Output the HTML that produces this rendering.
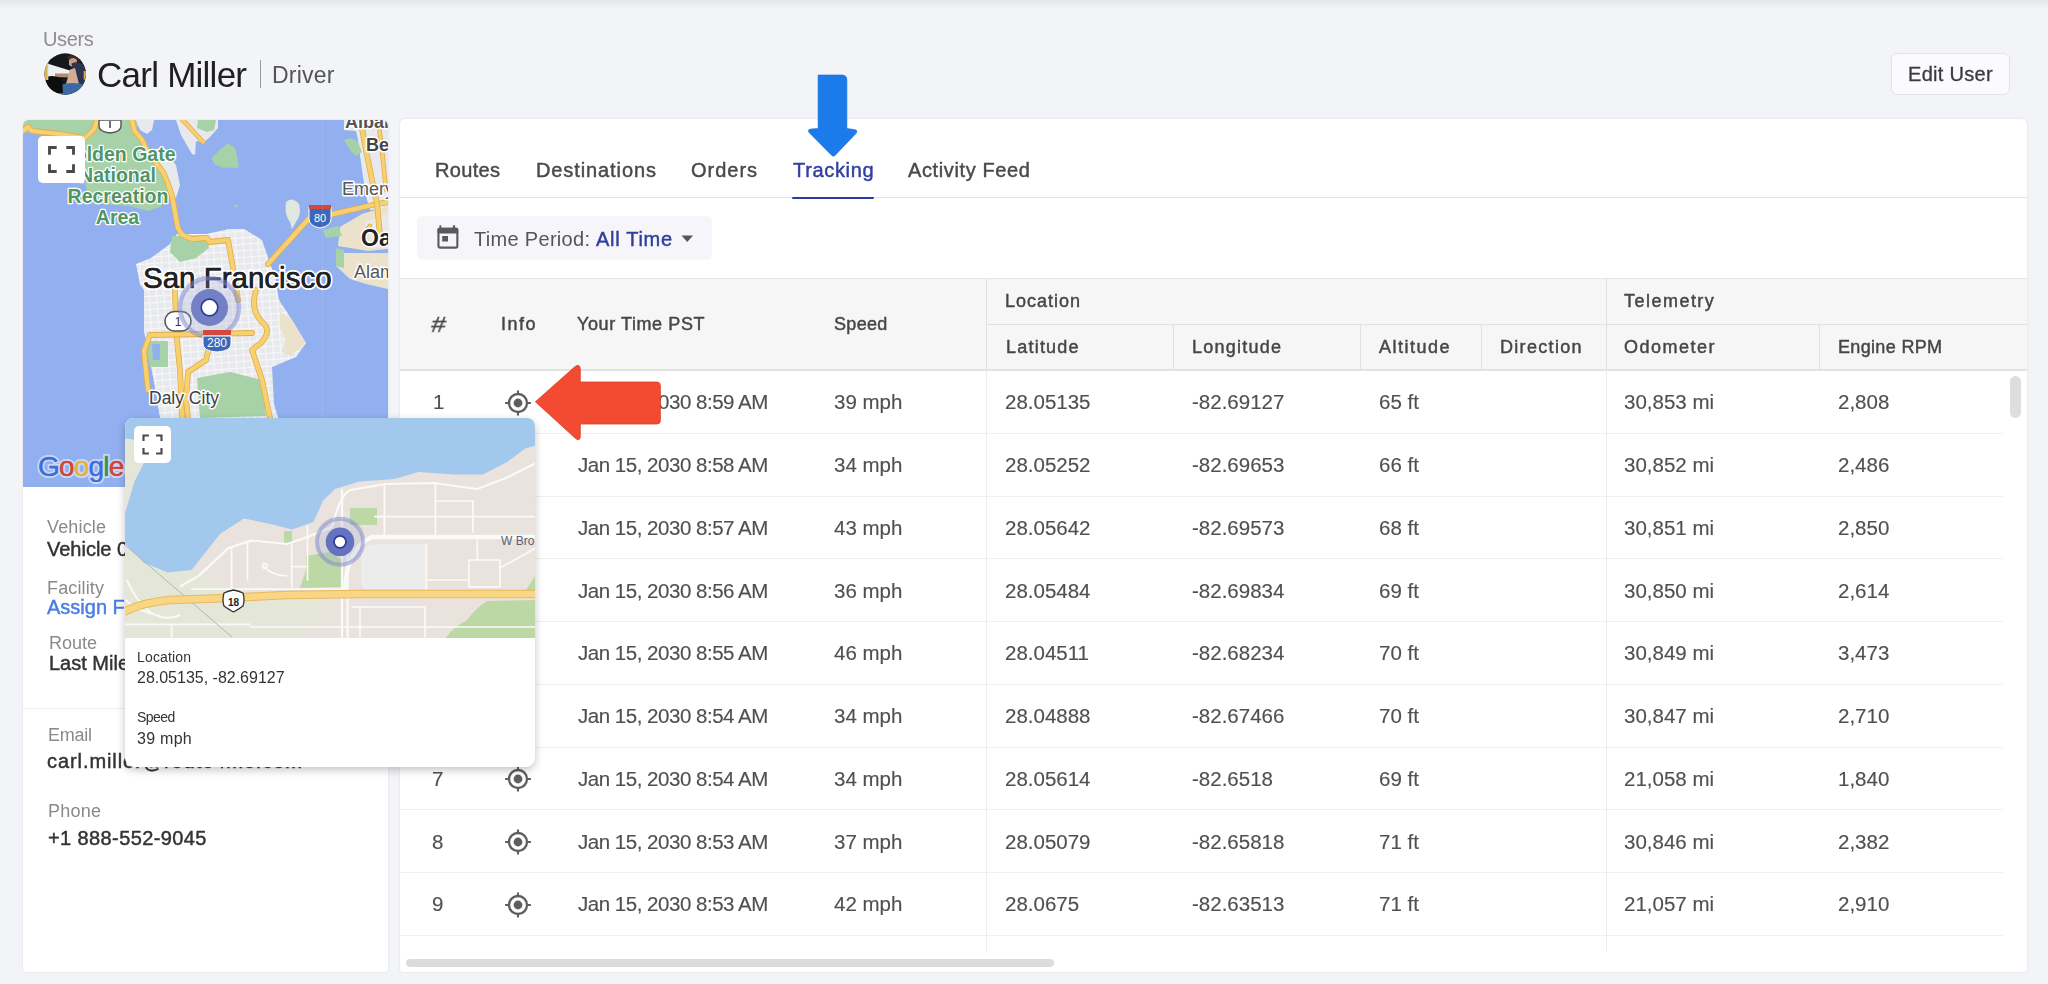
<!DOCTYPE html>
<html><head><meta charset="utf-8"><style>
html,body{margin:0;padding:0;}
body{-webkit-font-smoothing:antialiased;width:2048px;height:984px;overflow:hidden;position:relative;background:#f3f4f8;font-family:"Liberation Sans",sans-serif;}
.t{position:absolute;white-space:nowrap;line-height:1;will-change:transform;}
svg{display:block}
</style></head><body>
<div style="position:absolute;left:0px;top:0px;width:2048px;height:10px;background:linear-gradient(#e6e7ec,#f3f4f8)"></div>
<div class="t" style="left:43.30px;top:28.87px;font-size:20px;color:#8e8e8e;letter-spacing:-0.375px;font-weight:400;">Users</div>
<svg style="position:absolute;left:44px;top:53px" width="43" height="43" viewBox="44 53 43 43">
<defs><clipPath id="avc"><circle cx="65.2" cy="74.0" r="20.7"/></clipPath></defs>
<g clip-path="url(#avc)">
<rect x="40" y="50" width="50" height="50" fill="#15171b"/>
<path d="M48 63.7 L71.5 71 L72 74.5 L62 76 L48 78.5 Z" fill="#f1f1f1"/>
<path d="M55 73.6 L70.5 73.6 L70.5 77.6 L55 77 Z" fill="#b48c72"/>
<path d="M69 58 Q74 55 77 59 L76.5 66.5 Q72 68 69 65 Z" fill="#c79e86"/>
<path d="M67 57 Q73 52 79 57 L80 63 L77 60 Q73 56 69 60 Z" fill="#3a2a22"/>
<path d="M71.5 63.5 Q78 61 82 64 L85.8 70 L85.8 86 L77 86 L73 72 Z" fill="#2b3552"/>
<path d="M70 69.5 L75 68 L79 84 L70 86 L66 84 Z" fill="#d4ab95"/>
<path d="M59 86 Q66 82 80 83.5 L86 86 L86 96 L56 96 Z" fill="#3b69a6"/>
<path d="M46.5 77 Q54 74 62 79 L63 93 L46 93 Z" fill="#0d0e10"/>
<path d="M44 64 L48 64 L48 80 L44 80 Z" fill="#d9b14c"/>
<path d="M83.7 71 L86 71 L86 79.5 L83.7 79.5 Z" fill="#d9b14c"/>
<path d="M47.2 62 L48.3 62 L48.3 80 L47.2 80 Z" fill="#cfd3d8"/>
</g>
</svg>
<div class="t" style="left:96.50px;top:56.77px;font-size:35px;color:#202020;letter-spacing:-0.750px;font-weight:400;">Carl Miller</div>
<div style="position:absolute;left:259.5px;top:60px;width:1.6px;height:28px;background:#9a9a9a"></div>
<div class="t" style="left:271.50px;top:63.83px;font-size:23px;color:#555555;letter-spacing:0.240px;font-weight:400;">Driver</div>
<div style="position:absolute;left:1890.5px;top:52.5px;width:119px;height:42.5px;box-sizing:border-box;border:1px solid #e2e3e8;border-radius:6px;background:#fbfbfd"></div>
<div class="t" style="left:1907.80px;top:64.37px;font-size:20px;color:#3a3a40;letter-spacing:0.300px;font-weight:400;-webkit-text-stroke:0.3px #3a3a40;">Edit User</div>
<div style="position:absolute;left:23px;top:120px;width:365px;height:852.2px;background:#fff;border-radius:5px 5px 3px 3px;box-shadow:0 0 2px rgba(0,0,0,0.13)"></div>
<svg style="position:absolute;left:23px;top:120px;border-radius:6px 6px 0 0" width="365" height="367" viewBox="23 120 365 367"><defs><clipPath id="lmc"><path d="M23 126 Q23 120 29 120 H382 Q388 120 388 126 V487 H23 Z"/></clipPath></defs><g clip-path="url(#lmc)"><rect x="23" y="120" width="365" height="367" fill="#92b0ef"/>
<path d="M23 120 H140 L136 132 L142 140 L150 152 L160 165 L168 182 L172 197 L160 207 L148 211 L130 206 L104 204 L88 198 L85 180 L84 140 L60 135 L40 133 L23 132 Z" fill="#a7d1a6"/>
<path d="M136 120 H154 L152 130 L147 134 L140 130 Z" fill="#e8e9ed"/>
<path d="M150 150 L162 148 L176 165 L180 185 L176 198 L170 196 L165 178 L155 160 Z" fill="#e8e9ed"/>
<path d="M176 120 H218 L218 128 L210 137 L204 142 L196 141 L195 155 L192 154 L181 135 L178 126 Z" fill="#e8e9ed"/>
<path d="M198 120 H216 L214 130 L207 132 L197 128 Z" fill="#a7d1a6"/>
<path d="M211.6 158.3 L221 148.8 L227.7 143.6 L234.3 147.3 L237.2 156 L238.7 167.8 L224 167.8 L215.2 164.9 Z" fill="#a7d1a6"/>
<circle cx="236" cy="206" r="1.5" fill="#a7d1a6"/>
<path d="M286 202 Q292 196 299 204 Q302 214 296 222 L292 229 L290 222 Q284 214 286 202 Z" fill="#dfe8df"/>
<path d="M344 120 H388 V208 L370 210 L366 196 L362 170 L358 140 L356 131 L344 130 Z" fill="#e8e9ed"/>
<path d="M344 140 Q352 136 358 142 L362 152 L356 156 L350 150 Z" fill="#a7d1a6"/>
<path d="M340 227 L362 214 L388 206 V249 L368 251 L338 246 Z" fill="#ebe2cc"/>
<path d="M365 222 L388 214 V246 L372 248 Z" fill="#e8e9ed"/>
<path d="M336 253 L388 253 V289 L366 284 L350 279 L336 266 Z" fill="#ebe2cc"/>
<path d="M323 230 L338 226 L342 236 L326 238 Z" fill="#a7d1a6"/>
<path d="M336 248 L344 250 L344 268 L336 266 Z" fill="#a7d1a6"/>
<path d="M136 264 L151 258 L170 244 L177 234 L207 234 L229 229 L244 229 L262 240 L268 258 L275 277 L279 300 L292 320 L306 343 L296 357 L272 367 L274 404 L278 418 L278 487 L160 487 L160 418 L156 392 L148 351 L144 331 L144 290 L140 284 Z" fill="#e8e9ed"/>
<defs><pattern id="sfgrid" width="7.5" height="6.5" patternUnits="userSpaceOnUse" patternTransform="rotate(-4)"><path d="M0 0.5 H7.5 M0.5 0 V6.5" stroke="#fbfbfc" stroke-width="1.1"/></pattern></defs>
<path d="M136 264 L151 258 L170 244 L177 234 L207 234 L229 229 L244 229 L262 240 L268 258 L275 277 L279 300 L292 320 L306 343 L296 357 L272 367 L274 404 L278 418 L278 487 L160 487 L160 418 L156 392 L148 351 L144 331 L144 290 L140 284 Z" fill="url(#sfgrid)" opacity="0.8"/>
<path d="M280 312 L292 320 L300 334 L306 343 L298 350 L290 356 L282 352 L286 340 L280 328 Z" fill="#ebe2cc"/>
<path d="M172 236 L207 235 L209 248 L196 258 L180 262 L170 252 Z" fill="#a7d1a6"/>
<path d="M145 341 L168 341 L168 367 L150 367 Z" fill="#a7d1a6"/>
<path d="M152 344 L160 344 L160 360 L153 360 Z" fill="#92b0ef"/>
<path d="M197 378 L230 372 L262 380 L266 416 L200 418 Z" fill="#a7d1a6"/>
<path d="M131.7 119 L134.6 131 L141.8 139.6 L147.5 151 L154.8 161.3 L163.4 172.8 L167.7 183 L172 196 L175 211.8 L177.8 227.7 L182.2 234.9 L192.3 239.2 L206.7 237.8 L209.6 242 L228 240 L232 262 L238 300" fill="none" stroke="#e3ab4c" stroke-width="5.800000000000001" stroke-linejoin="round" stroke-linecap="round"/><path d="M131.7 119 L134.6 131 L141.8 139.6 L147.5 151 L154.8 161.3 L163.4 172.8 L167.7 183 L172 196 L175 211.8 L177.8 227.7 L182.2 234.9 L192.3 239.2 L206.7 237.8 L209.6 242 L228 240 L232 262 L238 300" fill="none" stroke="#f7d16f" stroke-width="4.2" stroke-linejoin="round" stroke-linecap="round"/>
<path d="M23 131 L28 127 L32 131 L41 132 L60 134 L85 138 L94 129.5 L97 121" fill="none" stroke="#e3ab4c" stroke-width="5.800000000000001" stroke-linejoin="round" stroke-linecap="round"/><path d="M23 131 L28 127 L32 131 L41 132 L60 134 L85 138 L94 129.5 L97 121" fill="none" stroke="#f7d16f" stroke-width="4.2" stroke-linejoin="round" stroke-linecap="round"/>
<path d="M181 118 L203 142" fill="none" stroke="#e3ab4c" stroke-width="4.800000000000001" stroke-linejoin="round" stroke-linecap="round"/><path d="M181 118 L203 142" fill="none" stroke="#f7d16f" stroke-width="3.2" stroke-linejoin="round" stroke-linecap="round"/>
<path d="M268 264 L309 218.5 L331.5 214.4 L376.7 204 L390 202" fill="none" stroke="#e3ab4c" stroke-width="5.800000000000001" stroke-linejoin="round" stroke-linecap="round"/><path d="M268 264 L309 218.5 L331.5 214.4 L376.7 204 L390 202" fill="none" stroke="#f7d16f" stroke-width="4.2" stroke-linejoin="round" stroke-linecap="round"/>
<path d="M360 118 L366 150 L372 180 L377 204 L380 235" fill="none" stroke="#e3ab4c" stroke-width="5.800000000000001" stroke-linejoin="round" stroke-linecap="round"/><path d="M360 118 L366 150 L372 180 L377 204 L380 235" fill="none" stroke="#f7d16f" stroke-width="4.2" stroke-linejoin="round" stroke-linecap="round"/>
<path d="M378 118 L382 150 L386 190" fill="none" stroke="#e3ab4c" stroke-width="4.6" stroke-linejoin="round" stroke-linecap="round"/><path d="M378 118 L382 150 L386 190" fill="none" stroke="#f7d16f" stroke-width="3" stroke-linejoin="round" stroke-linecap="round"/>
<path d="M370 226 L362 238" fill="none" stroke="#e3ab4c" stroke-width="4.6" stroke-linejoin="round" stroke-linecap="round"/><path d="M370 226 L362 238" fill="none" stroke="#f7d16f" stroke-width="3" stroke-linejoin="round" stroke-linecap="round"/>
<path d="M256 290 Q250 310 262 322 Q272 330 262 342 L252 350 L262 380 L270 418 L274 487" fill="none" stroke="#e3ab4c" stroke-width="5.800000000000001" stroke-linejoin="round" stroke-linecap="round"/><path d="M256 290 Q250 310 262 322 Q272 330 262 342 L252 350 L262 380 L270 418 L274 487" fill="none" stroke="#f7d16f" stroke-width="4.2" stroke-linejoin="round" stroke-linecap="round"/>
<path d="M175 290 L176 330 L180 371 L182 418" fill="none" stroke="#e3ab4c" stroke-width="5.800000000000001" stroke-linejoin="round" stroke-linecap="round"/><path d="M175 290 L176 330 L180 371 L182 418" fill="none" stroke="#f7d16f" stroke-width="4.2" stroke-linejoin="round" stroke-linecap="round"/>
<path d="M148 390 L144 351 L150 335 L205 334 L252 333" fill="none" stroke="#e3ab4c" stroke-width="5.800000000000001" stroke-linejoin="round" stroke-linecap="round"/><path d="M148 390 L144 351 L150 335 L205 334 L252 333" fill="none" stroke="#f7d16f" stroke-width="4.2" stroke-linejoin="round" stroke-linecap="round"/>
<path d="M211 339 L206 360 L188 372 L186 400 L188 418" fill="none" stroke="#e3ab4c" stroke-width="5.800000000000001" stroke-linejoin="round" stroke-linecap="round"/><path d="M211 339 L206 360 L188 372 L186 400 L188 418" fill="none" stroke="#f7d16f" stroke-width="4.2" stroke-linejoin="round" stroke-linecap="round"/>
<path d="M99 120 H121 V126 Q121 132 110 133 Q99 132 99 126 Z" fill="#fff" stroke="#555" stroke-width="1.4"/><path d="M110 121 V128" stroke="#444" stroke-width="1.5"/>
<rect x="165" y="311.5" width="26" height="19.5" rx="9.5" fill="#fff" stroke="#555" stroke-width="1.6"/><text x="178" y="326" font-size="12" fill="#333" text-anchor="middle" font-family="Liberation Sans, sans-serif">1</text>
<path d="M309 207 H331 V219 Q331 226 320 228 Q309 226 309 219 Z" fill="#3c68b7" stroke="#fff" stroke-width="1"/><rect x="309" y="205" width="22" height="4" fill="#d4473c"/><text x="320" y="222" font-size="11" fill="#fff" text-anchor="middle" font-family="Liberation Sans, sans-serif">80</text>
<text x="175.5" y="160.5" font-size="19.5" font-weight="700" fill="#4f9566" text-anchor="end" stroke="#fff" stroke-width="2.5" stroke-linejoin="round" paint-order="stroke" font-family="Liberation Sans, sans-serif">Golden Gate</text>
<text x="156" y="181.5" font-size="19.5" font-weight="700" fill="#4f9566" text-anchor="end" stroke="#fff" stroke-width="2.5" stroke-linejoin="round" paint-order="stroke" font-family="Liberation Sans, sans-serif">National</text>
<text x="118" y="203" font-size="19.5" font-weight="700" fill="#4f9566" text-anchor="middle" stroke="#fff" stroke-width="2.5" stroke-linejoin="round" paint-order="stroke" font-family="Liberation Sans, sans-serif">Recreation</text>
<text x="117.5" y="224" font-size="19.5" font-weight="700" fill="#4f9566" text-anchor="middle" stroke="#fff" stroke-width="2.5" stroke-linejoin="round" paint-order="stroke" font-family="Liberation Sans, sans-serif">Area</text>
<text x="345" y="128" font-size="18" font-weight="700" fill="#555" text-anchor="start" stroke="#fff" stroke-width="3" stroke-linejoin="round" paint-order="stroke" font-family="Liberation Sans, sans-serif">Albany</text>
<text x="366" y="151" font-size="18" font-weight="700" fill="#444" text-anchor="start" stroke="#fff" stroke-width="3" stroke-linejoin="round" paint-order="stroke" font-family="Liberation Sans, sans-serif">Berk</text>
<text x="342" y="195" font-size="18" font-weight="500" fill="#555" text-anchor="start" stroke="#fff" stroke-width="3" stroke-linejoin="round" paint-order="stroke" font-family="Liberation Sans, sans-serif">Emeryville</text>
<text x="361" y="245.5" font-size="23" font-weight="700" fill="#222" text-anchor="start" stroke="#fff" stroke-width="3" stroke-linejoin="round" paint-order="stroke" font-family="Liberation Sans, sans-serif">Oakland</text>
<text x="354" y="278" font-size="18" font-weight="500" fill="#555" text-anchor="start" stroke="#fff" stroke-width="3" stroke-linejoin="round" paint-order="stroke" font-family="Liberation Sans, sans-serif">Alameda</text>
<text x="143" y="287.5" font-size="29.5" font-weight="400" fill="#202124" text-anchor="start" stroke="#fff" stroke-width="4" stroke-linejoin="round" paint-order="stroke" font-family="Liberation Sans, sans-serif">San Francisco</text>
<text x="143" y="287.5" font-size="29.5" fill="#202124" stroke="#202124" stroke-width="0.5" font-family="Liberation Sans, sans-serif">San Francisco</text>
<circle cx="209.5" cy="307.5" r="29.5" fill="rgba(150,160,215,0.22)" stroke="rgba(125,135,205,0.5)" stroke-width="4.5"/><circle cx="209.5" cy="307.5" r="18.5" fill="#7480c6"/><circle cx="209.5" cy="307.5" r="8.3" fill="#fff" stroke="#2d3a9c" stroke-width="1.7"/>
<path d="M203 336 H231 V344 Q231 351 217 352 Q203 351 203 344 Z" fill="#3c68b7" stroke="#fff" stroke-width="1"/><rect x="203" y="330" width="28" height="5" fill="#d4473c"/><text x="217" y="347" font-size="12" fill="#fff" text-anchor="middle" font-family="Liberation Sans, sans-serif">280</text>
<text x="149" y="404" font-size="17.5" font-weight="500" fill="#3c4043" text-anchor="start" stroke="#fff" stroke-width="3" stroke-linejoin="round" paint-order="stroke" font-family="Liberation Sans, sans-serif">Daly City</text>
<text x="38" y="475.5" font-size="28" font-weight="400" stroke="#c9d8f7" stroke-width="4" paint-order="stroke" font-family="Liberation Sans, sans-serif" letter-spacing="-0.8"><tspan fill="#3f6fd8">G</tspan><tspan fill="#d2463a">o</tspan><tspan fill="#e6b33a">o</tspan><tspan fill="#3f6fd8">g</tspan><tspan fill="#3c8f53">l</tspan><tspan fill="#d2463a">e</tspan></text>
<text x="38" y="475.5" font-size="28" font-weight="400" stroke-width="0.3" opacity="0.9" font-family="Liberation Sans, sans-serif" letter-spacing="-0.8"><tspan fill="#3f6fd8" stroke="#3f6fd8">G</tspan><tspan fill="#d2463a" stroke="#d2463a">o</tspan><tspan fill="#e6b33a" stroke="#e6b33a">o</tspan><tspan fill="#3f6fd8" stroke="#3f6fd8">g</tspan><tspan fill="#3c8f53" stroke="#3c8f53">l</tspan><tspan fill="#d2463a" stroke="#d2463a">e</tspan></text>
<line x1="322.3" y1="120" x2="322.3" y2="487" stroke="rgba(255,255,255,0.12)" stroke-width="1"/>
<rect x="38" y="136" width="47" height="47" rx="5" fill="#fff"/><path d="M49.5 154.7 V147.5 H56.7 M66.3 147.5 H73.5 V154.7 M73.5 164.3 V171.5 H66.3 M56.7 171.5 H49.5 V164.3" fill="none" stroke="#4a4a4a" stroke-width="2.88"/></g></svg>
<div class="t" style="left:46.80px;top:518.36px;font-size:18px;color:#8a8a8a;letter-spacing:0.167px;font-weight:400;">Vehicle</div>
<div class="t" style="left:46.80px;top:539.07px;font-size:20px;color:#333333;letter-spacing:0.000px;font-weight:400;-webkit-text-stroke:0.45px #333333;">Vehicle 01</div>
<div class="t" style="left:47.00px;top:578.76px;font-size:18px;color:#8a8a8a;letter-spacing:0.143px;font-weight:400;">Facility</div>
<div class="t" style="left:47.00px;top:597.07px;font-size:20px;color:#4a7de6;letter-spacing:0.000px;font-weight:400;-webkit-text-stroke:0.45px #4a7de6;">Assign Facility</div>
<div class="t" style="left:48.50px;top:634.16px;font-size:18px;color:#8a8a8a;letter-spacing:0.000px;font-weight:400;">Route</div>
<div class="t" style="left:48.50px;top:653.07px;font-size:20px;color:#333333;letter-spacing:0.000px;font-weight:400;-webkit-text-stroke:0.45px #333333;">Last Mile Delivery</div>
<div style="position:absolute;left:23px;top:708px;width:365px;height:1px;background:#ececec"></div>
<div class="t" style="left:47.50px;top:725.56px;font-size:18px;color:#8a8a8a;letter-spacing:-0.250px;font-weight:400;">Email</div>
<div class="t" style="left:46.50px;top:751.37px;font-size:20px;color:#333333;letter-spacing:0.926px;font-weight:400;-webkit-text-stroke:0.45px #333333;">carl.miller@route4me.com</div>
<div class="t" style="left:47.50px;top:801.76px;font-size:18px;color:#8a8a8a;letter-spacing:0.225px;font-weight:400;">Phone</div>
<div class="t" style="left:47.50px;top:827.57px;font-size:20px;color:#333333;letter-spacing:0.393px;font-weight:400;-webkit-text-stroke:0.45px #333333;">+1 888-552-9045</div>
<div style="position:absolute;left:400px;top:118.8px;width:1626.7px;height:853.4px;background:#fff;border-radius:5px 5px 3px 3px;box-shadow:0 0 2px rgba(0,0,0,0.13)"></div>
<div class="t" style="left:434.60px;top:160.27px;font-size:20px;color:#4a4a4a;letter-spacing:0.320px;font-weight:400;-webkit-text-stroke:0.45px #4a4a4a;">Routes</div>
<div class="t" style="left:535.80px;top:160.27px;font-size:20px;color:#4a4a4a;letter-spacing:0.900px;font-weight:400;-webkit-text-stroke:0.45px #4a4a4a;">Destinations</div>
<div class="t" style="left:691.00px;top:160.27px;font-size:20px;color:#4a4a4a;letter-spacing:0.980px;font-weight:400;-webkit-text-stroke:0.45px #4a4a4a;">Orders</div>
<div class="t" style="left:792.50px;top:160.27px;font-size:20px;color:#303f9f;letter-spacing:0.671px;font-weight:400;-webkit-text-stroke:0.45px #303f9f;">Tracking</div>
<div class="t" style="left:908.00px;top:160.27px;font-size:20px;color:#4a4a4a;letter-spacing:0.625px;font-weight:400;-webkit-text-stroke:0.45px #4a4a4a;">Activity Feed</div>
<div style="position:absolute;left:400px;top:197px;width:1627px;height:1px;background:#e3e3e3"></div>
<div style="position:absolute;left:792px;top:196.6px;width:82px;height:2.8px;background:#2b3a9e;border-radius:1.5px"></div>
<div style="position:absolute;left:417px;top:216px;width:295px;height:44px;background:#f6f6fa;border-radius:6px"></div>
<svg style="position:absolute;left:436px;top:224px" width="24" height="26" viewBox="0 0 24 26"><rect x="2.45" y="4.75" width="18.9" height="18.9" rx="1.6" fill="none" stroke="#5a5a5e" stroke-width="2.1"/><rect x="1.6" y="3.8" width="20.6" height="5.6" rx="1.2" fill="#5a5a5e"/><rect x="3.4" y="1.3" width="1.9" height="3" fill="#5a5a5e"/><rect x="16.9" y="1.3" width="2.2" height="3" fill="#5a5a5e"/><rect x="6.2" y="12" width="5.8" height="5.5" fill="#5a5a5e"/></svg>
<div class="t" style="left:474.00px;top:229.37px;font-size:20px;color:#555555;letter-spacing:0.309px;font-weight:400;">Time Period:</div>
<div class="t" style="left:596.00px;top:229.37px;font-size:20px;color:#2f3e9e;letter-spacing:0.700px;font-weight:400;-webkit-text-stroke:0.45px #2f3e9e;">All Time</div>
<svg style="position:absolute;left:681px;top:235px" width="13" height="8"><path d="M0.5 0.5 L12 0.5 L6.25 7 Z" fill="#555"/></svg>
<div style="position:absolute;left:400px;top:278px;width:1627px;height:91px;background:#f6f6f6"></div>
<div style="position:absolute;left:400px;top:278px;width:1627px;height:1px;background:#e6e6e6"></div>
<div style="position:absolute;left:400px;top:369px;width:1627px;height:1.5px;background:#e2e2e2"></div>
<div style="position:absolute;left:986px;top:323.5px;width:1041px;height:1.2px;background:#e2e2e2"></div>
<div style="position:absolute;left:985.5px;top:278px;width:1.2px;height:91px;background:#e0e0e0"></div>
<div style="position:absolute;left:1605.5px;top:278px;width:1.2px;height:91px;background:#e0e0e0"></div>
<div style="position:absolute;left:1172.8px;top:323.5px;width:1.2px;height:45.5px;background:#e0e0e0"></div>
<div style="position:absolute;left:1360.2px;top:323.5px;width:1.2px;height:45.5px;background:#e0e0e0"></div>
<div style="position:absolute;left:1481.2px;top:323.5px;width:1.2px;height:45.5px;background:#e0e0e0"></div>
<div style="position:absolute;left:1819.2px;top:323.5px;width:1.2px;height:45.5px;background:#e0e0e0"></div>
<div class="t" style="left:429.50px;top:313.72px;font-size:21px;color:#464646;letter-spacing:0.000px;font-weight:400;-webkit-text-stroke:0.3px #464646;transform:skewX(-8deg) scaleX(1.25);transform-origin:0 100%;">#</div>
<div class="t" style="left:500.60px;top:315.26px;font-size:18px;color:#464646;letter-spacing:1.467px;font-weight:400;-webkit-text-stroke:0.45px #464646;">Info</div>
<div class="t" style="left:576.70px;top:315.26px;font-size:18px;color:#464646;letter-spacing:0.592px;font-weight:400;-webkit-text-stroke:0.45px #464646;">Your Time PST</div>
<div class="t" style="left:833.60px;top:315.26px;font-size:18px;color:#464646;letter-spacing:0.325px;font-weight:400;-webkit-text-stroke:0.45px #464646;">Speed</div>
<div class="t" style="left:1005.40px;top:292.46px;font-size:18px;color:#464646;letter-spacing:0.986px;font-weight:400;-webkit-text-stroke:0.45px #464646;">Location</div>
<div class="t" style="left:1623.90px;top:292.46px;font-size:18px;color:#464646;letter-spacing:1.475px;font-weight:400;-webkit-text-stroke:0.45px #464646;">Telemetry</div>
<div class="t" style="left:1005.60px;top:338.46px;font-size:18px;color:#464646;letter-spacing:1.214px;font-weight:400;-webkit-text-stroke:0.45px #464646;">Latitude</div>
<div class="t" style="left:1192.00px;top:338.46px;font-size:18px;color:#464646;letter-spacing:1.238px;font-weight:400;-webkit-text-stroke:0.45px #464646;">Longitude</div>
<div class="t" style="left:1378.70px;top:338.46px;font-size:18px;color:#464646;letter-spacing:1.500px;font-weight:400;-webkit-text-stroke:0.45px #464646;">Altitude</div>
<div class="t" style="left:1500.00px;top:338.46px;font-size:18px;color:#464646;letter-spacing:1.312px;font-weight:400;-webkit-text-stroke:0.45px #464646;">Direction</div>
<div class="t" style="left:1624.00px;top:338.46px;font-size:18px;color:#464646;letter-spacing:1.500px;font-weight:400;-webkit-text-stroke:0.45px #464646;">Odometer</div>
<div class="t" style="left:1838.40px;top:338.46px;font-size:18px;color:#464646;letter-spacing:0.333px;font-weight:400;-webkit-text-stroke:0.45px #464646;">Engine RPM</div>
<div style="position:absolute;left:400px;top:432.8px;width:1603px;height:1px;background:#f1f1f1"></div>
<div class="t" style="left:433.20px;top:392.35px;font-size:20.5px;color:#505050;letter-spacing:0.000px;font-weight:400;-webkit-text-stroke:0.15px #505050;">1</div>
<svg style="position:absolute;left:504.0px;top:388.7px" width="28" height="28" viewBox="-14 -14 28 28"><circle cx="0" cy="0" r="9.0" fill="none" stroke="#5e5e5e" stroke-width="2.3"/><circle cx="0" cy="0" r="4.4" fill="#5e5e5e"/><path d="M0 -12.6 V-9 M0 9 V12.6 M-12.9 0 H-9 M9 0 H12.9" stroke="#5e5e5e" stroke-width="2.1"/></svg>
<div class="t" style="left:577.80px;top:392.35px;font-size:20.5px;color:#505050;letter-spacing:-0.479px;font-weight:400;-webkit-text-stroke:0.15px #505050;">Jan 15, 2030 8:59 AM</div>
<div class="t" style="left:833.60px;top:392.35px;font-size:20.5px;color:#505050;letter-spacing:0.000px;font-weight:400;-webkit-text-stroke:0.15px #505050;">39 mph</div>
<div class="t" style="left:1005.40px;top:392.35px;font-size:20.5px;color:#505050;letter-spacing:0.000px;font-weight:400;-webkit-text-stroke:0.15px #505050;">28.05135</div>
<div class="t" style="left:1192.00px;top:392.35px;font-size:20.5px;color:#505050;letter-spacing:0.000px;font-weight:400;-webkit-text-stroke:0.15px #505050;">-82.69127</div>
<div class="t" style="left:1378.70px;top:392.35px;font-size:20.5px;color:#505050;letter-spacing:0.000px;font-weight:400;-webkit-text-stroke:0.15px #505050;">65 ft</div>
<div class="t" style="left:1624.00px;top:392.35px;font-size:20.5px;color:#505050;letter-spacing:0.000px;font-weight:400;-webkit-text-stroke:0.15px #505050;">30,853 mi</div>
<div class="t" style="left:1838.40px;top:392.35px;font-size:20.5px;color:#505050;letter-spacing:0.000px;font-weight:400;-webkit-text-stroke:0.15px #505050;">2,808</div>
<div style="position:absolute;left:400px;top:495.6px;width:1603px;height:1px;background:#f1f1f1"></div>
<div class="t" style="left:431.60px;top:455.11px;font-size:20.5px;color:#505050;letter-spacing:0.000px;font-weight:400;-webkit-text-stroke:0.15px #505050;">2</div>
<svg style="position:absolute;left:504.0px;top:451.5px" width="28" height="28" viewBox="-14 -14 28 28"><circle cx="0" cy="0" r="9.0" fill="none" stroke="#5e5e5e" stroke-width="2.3"/><circle cx="0" cy="0" r="4.4" fill="#5e5e5e"/><path d="M0 -12.6 V-9 M0 9 V12.6 M-12.9 0 H-9 M9 0 H12.9" stroke="#5e5e5e" stroke-width="2.1"/></svg>
<div class="t" style="left:577.80px;top:455.11px;font-size:20.5px;color:#505050;letter-spacing:-0.479px;font-weight:400;-webkit-text-stroke:0.15px #505050;">Jan 15, 2030 8:58 AM</div>
<div class="t" style="left:833.60px;top:455.11px;font-size:20.5px;color:#505050;letter-spacing:0.000px;font-weight:400;-webkit-text-stroke:0.15px #505050;">34 mph</div>
<div class="t" style="left:1005.40px;top:455.11px;font-size:20.5px;color:#505050;letter-spacing:0.000px;font-weight:400;-webkit-text-stroke:0.15px #505050;">28.05252</div>
<div class="t" style="left:1192.00px;top:455.11px;font-size:20.5px;color:#505050;letter-spacing:0.000px;font-weight:400;-webkit-text-stroke:0.15px #505050;">-82.69653</div>
<div class="t" style="left:1378.70px;top:455.11px;font-size:20.5px;color:#505050;letter-spacing:0.000px;font-weight:400;-webkit-text-stroke:0.15px #505050;">66 ft</div>
<div class="t" style="left:1624.00px;top:455.11px;font-size:20.5px;color:#505050;letter-spacing:0.000px;font-weight:400;-webkit-text-stroke:0.15px #505050;">30,852 mi</div>
<div class="t" style="left:1838.40px;top:455.11px;font-size:20.5px;color:#505050;letter-spacing:0.000px;font-weight:400;-webkit-text-stroke:0.15px #505050;">2,486</div>
<div style="position:absolute;left:400px;top:558.3px;width:1603px;height:1px;background:#f1f1f1"></div>
<div class="t" style="left:431.60px;top:517.87px;font-size:20.5px;color:#505050;letter-spacing:0.000px;font-weight:400;-webkit-text-stroke:0.15px #505050;">3</div>
<svg style="position:absolute;left:504.0px;top:514.2px" width="28" height="28" viewBox="-14 -14 28 28"><circle cx="0" cy="0" r="9.0" fill="none" stroke="#5e5e5e" stroke-width="2.3"/><circle cx="0" cy="0" r="4.4" fill="#5e5e5e"/><path d="M0 -12.6 V-9 M0 9 V12.6 M-12.9 0 H-9 M9 0 H12.9" stroke="#5e5e5e" stroke-width="2.1"/></svg>
<div class="t" style="left:577.80px;top:517.87px;font-size:20.5px;color:#505050;letter-spacing:-0.479px;font-weight:400;-webkit-text-stroke:0.15px #505050;">Jan 15, 2030 8:57 AM</div>
<div class="t" style="left:833.60px;top:517.87px;font-size:20.5px;color:#505050;letter-spacing:0.000px;font-weight:400;-webkit-text-stroke:0.15px #505050;">43 mph</div>
<div class="t" style="left:1005.40px;top:517.87px;font-size:20.5px;color:#505050;letter-spacing:0.000px;font-weight:400;-webkit-text-stroke:0.15px #505050;">28.05642</div>
<div class="t" style="left:1192.00px;top:517.87px;font-size:20.5px;color:#505050;letter-spacing:0.000px;font-weight:400;-webkit-text-stroke:0.15px #505050;">-82.69573</div>
<div class="t" style="left:1378.70px;top:517.87px;font-size:20.5px;color:#505050;letter-spacing:0.000px;font-weight:400;-webkit-text-stroke:0.15px #505050;">68 ft</div>
<div class="t" style="left:1624.00px;top:517.87px;font-size:20.5px;color:#505050;letter-spacing:0.000px;font-weight:400;-webkit-text-stroke:0.15px #505050;">30,851 mi</div>
<div class="t" style="left:1838.40px;top:517.87px;font-size:20.5px;color:#505050;letter-spacing:0.000px;font-weight:400;-webkit-text-stroke:0.15px #505050;">2,850</div>
<div style="position:absolute;left:400px;top:621.1px;width:1603px;height:1px;background:#f1f1f1"></div>
<div class="t" style="left:431.60px;top:580.63px;font-size:20.5px;color:#505050;letter-spacing:0.000px;font-weight:400;-webkit-text-stroke:0.15px #505050;">4</div>
<svg style="position:absolute;left:504.0px;top:577.0px" width="28" height="28" viewBox="-14 -14 28 28"><circle cx="0" cy="0" r="9.0" fill="none" stroke="#5e5e5e" stroke-width="2.3"/><circle cx="0" cy="0" r="4.4" fill="#5e5e5e"/><path d="M0 -12.6 V-9 M0 9 V12.6 M-12.9 0 H-9 M9 0 H12.9" stroke="#5e5e5e" stroke-width="2.1"/></svg>
<div class="t" style="left:577.80px;top:580.63px;font-size:20.5px;color:#505050;letter-spacing:-0.479px;font-weight:400;-webkit-text-stroke:0.15px #505050;">Jan 15, 2030 8:56 AM</div>
<div class="t" style="left:833.60px;top:580.63px;font-size:20.5px;color:#505050;letter-spacing:0.000px;font-weight:400;-webkit-text-stroke:0.15px #505050;">36 mph</div>
<div class="t" style="left:1005.40px;top:580.63px;font-size:20.5px;color:#505050;letter-spacing:0.000px;font-weight:400;-webkit-text-stroke:0.15px #505050;">28.05484</div>
<div class="t" style="left:1192.00px;top:580.63px;font-size:20.5px;color:#505050;letter-spacing:0.000px;font-weight:400;-webkit-text-stroke:0.15px #505050;">-82.69834</div>
<div class="t" style="left:1378.70px;top:580.63px;font-size:20.5px;color:#505050;letter-spacing:0.000px;font-weight:400;-webkit-text-stroke:0.15px #505050;">69 ft</div>
<div class="t" style="left:1624.00px;top:580.63px;font-size:20.5px;color:#505050;letter-spacing:0.000px;font-weight:400;-webkit-text-stroke:0.15px #505050;">30,850 mi</div>
<div class="t" style="left:1838.40px;top:580.63px;font-size:20.5px;color:#505050;letter-spacing:0.000px;font-weight:400;-webkit-text-stroke:0.15px #505050;">2,614</div>
<div style="position:absolute;left:400px;top:683.8px;width:1603px;height:1px;background:#f1f1f1"></div>
<div class="t" style="left:431.60px;top:643.39px;font-size:20.5px;color:#505050;letter-spacing:0.000px;font-weight:400;-webkit-text-stroke:0.15px #505050;">5</div>
<svg style="position:absolute;left:504.0px;top:639.7px" width="28" height="28" viewBox="-14 -14 28 28"><circle cx="0" cy="0" r="9.0" fill="none" stroke="#5e5e5e" stroke-width="2.3"/><circle cx="0" cy="0" r="4.4" fill="#5e5e5e"/><path d="M0 -12.6 V-9 M0 9 V12.6 M-12.9 0 H-9 M9 0 H12.9" stroke="#5e5e5e" stroke-width="2.1"/></svg>
<div class="t" style="left:577.80px;top:643.39px;font-size:20.5px;color:#505050;letter-spacing:-0.479px;font-weight:400;-webkit-text-stroke:0.15px #505050;">Jan 15, 2030 8:55 AM</div>
<div class="t" style="left:833.60px;top:643.39px;font-size:20.5px;color:#505050;letter-spacing:0.000px;font-weight:400;-webkit-text-stroke:0.15px #505050;">46 mph</div>
<div class="t" style="left:1005.40px;top:643.39px;font-size:20.5px;color:#505050;letter-spacing:0.000px;font-weight:400;-webkit-text-stroke:0.15px #505050;">28.04511</div>
<div class="t" style="left:1192.00px;top:643.39px;font-size:20.5px;color:#505050;letter-spacing:0.000px;font-weight:400;-webkit-text-stroke:0.15px #505050;">-82.68234</div>
<div class="t" style="left:1378.70px;top:643.39px;font-size:20.5px;color:#505050;letter-spacing:0.000px;font-weight:400;-webkit-text-stroke:0.15px #505050;">70 ft</div>
<div class="t" style="left:1624.00px;top:643.39px;font-size:20.5px;color:#505050;letter-spacing:0.000px;font-weight:400;-webkit-text-stroke:0.15px #505050;">30,849 mi</div>
<div class="t" style="left:1838.40px;top:643.39px;font-size:20.5px;color:#505050;letter-spacing:0.000px;font-weight:400;-webkit-text-stroke:0.15px #505050;">3,473</div>
<div style="position:absolute;left:400px;top:746.6px;width:1603px;height:1px;background:#f1f1f1"></div>
<div class="t" style="left:431.60px;top:706.15px;font-size:20.5px;color:#505050;letter-spacing:0.000px;font-weight:400;-webkit-text-stroke:0.15px #505050;">6</div>
<svg style="position:absolute;left:504.0px;top:702.5px" width="28" height="28" viewBox="-14 -14 28 28"><circle cx="0" cy="0" r="9.0" fill="none" stroke="#5e5e5e" stroke-width="2.3"/><circle cx="0" cy="0" r="4.4" fill="#5e5e5e"/><path d="M0 -12.6 V-9 M0 9 V12.6 M-12.9 0 H-9 M9 0 H12.9" stroke="#5e5e5e" stroke-width="2.1"/></svg>
<div class="t" style="left:577.80px;top:706.15px;font-size:20.5px;color:#505050;letter-spacing:-0.479px;font-weight:400;-webkit-text-stroke:0.15px #505050;">Jan 15, 2030 8:54 AM</div>
<div class="t" style="left:833.60px;top:706.15px;font-size:20.5px;color:#505050;letter-spacing:0.000px;font-weight:400;-webkit-text-stroke:0.15px #505050;">34 mph</div>
<div class="t" style="left:1005.40px;top:706.15px;font-size:20.5px;color:#505050;letter-spacing:0.000px;font-weight:400;-webkit-text-stroke:0.15px #505050;">28.04888</div>
<div class="t" style="left:1192.00px;top:706.15px;font-size:20.5px;color:#505050;letter-spacing:0.000px;font-weight:400;-webkit-text-stroke:0.15px #505050;">-82.67466</div>
<div class="t" style="left:1378.70px;top:706.15px;font-size:20.5px;color:#505050;letter-spacing:0.000px;font-weight:400;-webkit-text-stroke:0.15px #505050;">70 ft</div>
<div class="t" style="left:1624.00px;top:706.15px;font-size:20.5px;color:#505050;letter-spacing:0.000px;font-weight:400;-webkit-text-stroke:0.15px #505050;">30,847 mi</div>
<div class="t" style="left:1838.40px;top:706.15px;font-size:20.5px;color:#505050;letter-spacing:0.000px;font-weight:400;-webkit-text-stroke:0.15px #505050;">2,710</div>
<div style="position:absolute;left:400px;top:809.4px;width:1603px;height:1px;background:#f1f1f1"></div>
<div class="t" style="left:431.60px;top:768.91px;font-size:20.5px;color:#505050;letter-spacing:0.000px;font-weight:400;-webkit-text-stroke:0.15px #505050;">7</div>
<svg style="position:absolute;left:504.0px;top:765.3px" width="28" height="28" viewBox="-14 -14 28 28"><circle cx="0" cy="0" r="9.0" fill="none" stroke="#5e5e5e" stroke-width="2.3"/><circle cx="0" cy="0" r="4.4" fill="#5e5e5e"/><path d="M0 -12.6 V-9 M0 9 V12.6 M-12.9 0 H-9 M9 0 H12.9" stroke="#5e5e5e" stroke-width="2.1"/></svg>
<div class="t" style="left:577.80px;top:768.91px;font-size:20.5px;color:#505050;letter-spacing:-0.479px;font-weight:400;-webkit-text-stroke:0.15px #505050;">Jan 15, 2030 8:54 AM</div>
<div class="t" style="left:833.60px;top:768.91px;font-size:20.5px;color:#505050;letter-spacing:0.000px;font-weight:400;-webkit-text-stroke:0.15px #505050;">34 mph</div>
<div class="t" style="left:1005.40px;top:768.91px;font-size:20.5px;color:#505050;letter-spacing:0.000px;font-weight:400;-webkit-text-stroke:0.15px #505050;">28.05614</div>
<div class="t" style="left:1192.00px;top:768.91px;font-size:20.5px;color:#505050;letter-spacing:0.000px;font-weight:400;-webkit-text-stroke:0.15px #505050;">-82.6518</div>
<div class="t" style="left:1378.70px;top:768.91px;font-size:20.5px;color:#505050;letter-spacing:0.000px;font-weight:400;-webkit-text-stroke:0.15px #505050;">69 ft</div>
<div class="t" style="left:1624.00px;top:768.91px;font-size:20.5px;color:#505050;letter-spacing:0.000px;font-weight:400;-webkit-text-stroke:0.15px #505050;">21,058 mi</div>
<div class="t" style="left:1838.40px;top:768.91px;font-size:20.5px;color:#505050;letter-spacing:0.000px;font-weight:400;-webkit-text-stroke:0.15px #505050;">1,840</div>
<div style="position:absolute;left:400px;top:872.1px;width:1603px;height:1px;background:#f1f1f1"></div>
<div class="t" style="left:431.60px;top:831.67px;font-size:20.5px;color:#505050;letter-spacing:0.000px;font-weight:400;-webkit-text-stroke:0.15px #505050;">8</div>
<svg style="position:absolute;left:504.0px;top:828.0px" width="28" height="28" viewBox="-14 -14 28 28"><circle cx="0" cy="0" r="9.0" fill="none" stroke="#5e5e5e" stroke-width="2.3"/><circle cx="0" cy="0" r="4.4" fill="#5e5e5e"/><path d="M0 -12.6 V-9 M0 9 V12.6 M-12.9 0 H-9 M9 0 H12.9" stroke="#5e5e5e" stroke-width="2.1"/></svg>
<div class="t" style="left:577.80px;top:831.67px;font-size:20.5px;color:#505050;letter-spacing:-0.479px;font-weight:400;-webkit-text-stroke:0.15px #505050;">Jan 15, 2030 8:53 AM</div>
<div class="t" style="left:833.60px;top:831.67px;font-size:20.5px;color:#505050;letter-spacing:0.000px;font-weight:400;-webkit-text-stroke:0.15px #505050;">37 mph</div>
<div class="t" style="left:1005.40px;top:831.67px;font-size:20.5px;color:#505050;letter-spacing:0.000px;font-weight:400;-webkit-text-stroke:0.15px #505050;">28.05079</div>
<div class="t" style="left:1192.00px;top:831.67px;font-size:20.5px;color:#505050;letter-spacing:0.000px;font-weight:400;-webkit-text-stroke:0.15px #505050;">-82.65818</div>
<div class="t" style="left:1378.70px;top:831.67px;font-size:20.5px;color:#505050;letter-spacing:0.000px;font-weight:400;-webkit-text-stroke:0.15px #505050;">71 ft</div>
<div class="t" style="left:1624.00px;top:831.67px;font-size:20.5px;color:#505050;letter-spacing:0.000px;font-weight:400;-webkit-text-stroke:0.15px #505050;">30,846 mi</div>
<div class="t" style="left:1838.40px;top:831.67px;font-size:20.5px;color:#505050;letter-spacing:0.000px;font-weight:400;-webkit-text-stroke:0.15px #505050;">2,382</div>
<div style="position:absolute;left:400px;top:934.9px;width:1603px;height:1px;background:#f1f1f1"></div>
<div class="t" style="left:431.60px;top:894.43px;font-size:20.5px;color:#505050;letter-spacing:0.000px;font-weight:400;-webkit-text-stroke:0.15px #505050;">9</div>
<svg style="position:absolute;left:504.0px;top:890.8px" width="28" height="28" viewBox="-14 -14 28 28"><circle cx="0" cy="0" r="9.0" fill="none" stroke="#5e5e5e" stroke-width="2.3"/><circle cx="0" cy="0" r="4.4" fill="#5e5e5e"/><path d="M0 -12.6 V-9 M0 9 V12.6 M-12.9 0 H-9 M9 0 H12.9" stroke="#5e5e5e" stroke-width="2.1"/></svg>
<div class="t" style="left:577.80px;top:894.43px;font-size:20.5px;color:#505050;letter-spacing:-0.479px;font-weight:400;-webkit-text-stroke:0.15px #505050;">Jan 15, 2030 8:53 AM</div>
<div class="t" style="left:833.60px;top:894.43px;font-size:20.5px;color:#505050;letter-spacing:0.000px;font-weight:400;-webkit-text-stroke:0.15px #505050;">42 mph</div>
<div class="t" style="left:1005.40px;top:894.43px;font-size:20.5px;color:#505050;letter-spacing:0.000px;font-weight:400;-webkit-text-stroke:0.15px #505050;">28.0675</div>
<div class="t" style="left:1192.00px;top:894.43px;font-size:20.5px;color:#505050;letter-spacing:0.000px;font-weight:400;-webkit-text-stroke:0.15px #505050;">-82.63513</div>
<div class="t" style="left:1378.70px;top:894.43px;font-size:20.5px;color:#505050;letter-spacing:0.000px;font-weight:400;-webkit-text-stroke:0.15px #505050;">71 ft</div>
<div class="t" style="left:1624.00px;top:894.43px;font-size:20.5px;color:#505050;letter-spacing:0.000px;font-weight:400;-webkit-text-stroke:0.15px #505050;">21,057 mi</div>
<div class="t" style="left:1838.40px;top:894.43px;font-size:20.5px;color:#505050;letter-spacing:0.000px;font-weight:400;-webkit-text-stroke:0.15px #505050;">2,910</div>
<div style="position:absolute;left:985.5px;top:370px;width:1.2px;height:581px;background:#ececec"></div>
<div style="position:absolute;left:1605.5px;top:370px;width:1.2px;height:581px;background:#ececec"></div>
<div style="position:absolute;left:2009.8px;top:376px;width:11.5px;height:42px;background:#dedede;border-radius:6px"></div>
<div style="position:absolute;left:405.5px;top:959px;width:648px;height:7.5px;background:#dcdcdc;border-radius:4px"></div>
<div style="position:absolute;left:125px;top:418px;width:410px;height:349px;background:#fff;border-radius:9px;box-shadow:0 3px 9px rgba(0,0,0,0.24)"></div>
<svg style="position:absolute;left:125px;top:418px" width="410" height="220" viewBox="125 418 410 220"><defs><clipPath id="pmc"><path d="M125 427 Q125 418 134 418 H526 Q535 418 535 427 V638 H125 Z"/></clipPath></defs><g clip-path="url(#pmc)"><rect x="125" y="418" width="410" height="220" fill="#e9e2dd"/>
<path d="M125 540 L144 563 L168 572 L192 570 L220 586 L240 598 L125 615 Z" fill="#e4e7d7"/>
<path d="M125 610 L200 600 L300 596 L330 605 L300 637 H125 Z" fill="#e4e7d7"/>
<path d="M125 418 H535 V446 L526 448 L507 462 L483 474.5 L454 474.5 L418.5 472 L394.6 479 L359 481.6 L335 489 L323 500.7 L313.4 522 L292 529.4 L272.8 524.6 L244 518.6 L220 534 L191.6 570 L167.8 572.4 L144 562.8 L125 543.7 V512.7 L134.3 481.6 L146.3 457.8 L144 441 L125 438.7 Z" fill="#a3c8ee"/>
<path d="M125 438.7 L144 441 L146.3 457.8 L134.3 481.6 L125 512.7 Z" fill="#e4e7d7"/>
<rect x="350" y="508" width="27" height="17" fill="#bcd8a4"/>
<rect x="284" y="531" width="8" height="12" fill="#bcd8a4"/>
<path d="M306 556 L330 552 L342 560 L342 587 L300 588 L306 570 Z" fill="#bcd8a4"/>
<path d="M444 640 Q455 625 466 621 Q478 606 487 601 L536 600 V640 Z" fill="#bcd8a4"/><path d="M526 590 L536 575 V592 Z" fill="#bcd8a4"/>
<path d="M361 552 Q365 544 376 544 H426 V589 H366 Q361 589 361 582 Z" fill="#ececec"/>
<path d="M345 592 Q346 548 372 537 L536 537" fill="none" stroke="#fbfaf7" stroke-width="4.4" stroke-linejoin="round" stroke-linecap="round"/>
<path d="M181 586 L199 575.6 L228 548.4 L251 540.5 L287 544 L307.5 537 L332 527 Q340 495 350 490 L386 484 L434 483 L477 489 L506 478 L536 463" fill="none" stroke="#fbfaf7" stroke-width="2.2" stroke-linejoin="round" stroke-linecap="round"/>
<path d="M342 490 L342 637" fill="none" stroke="#fbfaf7" stroke-width="2.2" stroke-linejoin="round" stroke-linecap="round"/>
<path d="M347.5 545 L347.5 637" fill="none" stroke="#fbfaf7" stroke-width="2.2" stroke-linejoin="round" stroke-linecap="round"/>
<path d="M231.6 548 L231.6 589" fill="none" stroke="#fbfaf7" stroke-width="1.7" stroke-linejoin="round" stroke-linecap="round"/>
<path d="M247.5 541.6 L247.5 580" fill="none" stroke="#fbfaf7" stroke-width="1.7" stroke-linejoin="round" stroke-linecap="round"/>
<path d="M291.7 544 L291.7 587" fill="none" stroke="#fbfaf7" stroke-width="1.7" stroke-linejoin="round" stroke-linecap="round"/>
<path d="M307.5 526 L307.5 580" fill="none" stroke="#fbfaf7" stroke-width="1.7" stroke-linejoin="round" stroke-linecap="round"/>
<path d="M384.4 484 L384.4 535" fill="none" stroke="#fbfaf7" stroke-width="1.7" stroke-linejoin="round" stroke-linecap="round"/>
<path d="M435.4 483 L435.4 535" fill="none" stroke="#fbfaf7" stroke-width="1.7" stroke-linejoin="round" stroke-linecap="round"/>
<path d="M472.8 501 L472.8 532" fill="none" stroke="#fbfaf7" stroke-width="1.7" stroke-linejoin="round" stroke-linecap="round"/>
<path d="M477.3 537 L477.3 560" fill="none" stroke="#fbfaf7" stroke-width="1.7" stroke-linejoin="round" stroke-linecap="round"/>
<path d="M426.3 544 L426.3 590" fill="none" stroke="#fbfaf7" stroke-width="1.7" stroke-linejoin="round" stroke-linecap="round"/>
<path d="M425 607 L425 637" fill="none" stroke="#fbfaf7" stroke-width="1.7" stroke-linejoin="round" stroke-linecap="round"/>
<path d="M171.6 624 L171.6 637" fill="none" stroke="#fbfaf7" stroke-width="1.7" stroke-linejoin="round" stroke-linecap="round"/>
<path d="M360 607 L360 637" fill="none" stroke="#fbfaf7" stroke-width="1.7" stroke-linejoin="round" stroke-linecap="round"/>
<path d="M192 589.2 L345 589.2" fill="none" stroke="#fbfaf7" stroke-width="1.7" stroke-linejoin="round" stroke-linecap="round"/>
<path d="M291.7 566.6 L307.5 566.6" fill="none" stroke="#fbfaf7" stroke-width="1.7" stroke-linejoin="round" stroke-linecap="round"/>
<path d="M375 516.7 L536 516.7" fill="none" stroke="#fbfaf7" stroke-width="1.7" stroke-linejoin="round" stroke-linecap="round"/>
<path d="M436 501 L474 501" fill="none" stroke="#fbfaf7" stroke-width="1.7" stroke-linejoin="round" stroke-linecap="round"/>
<path d="M426 580 L469 580" fill="none" stroke="#fbfaf7" stroke-width="1.7" stroke-linejoin="round" stroke-linecap="round"/>
<path d="M352 607 L425 607" fill="none" stroke="#fbfaf7" stroke-width="1.7" stroke-linejoin="round" stroke-linecap="round"/>
<path d="M125 624.3 L250 624.3" fill="none" stroke="#fbfaf7" stroke-width="1.7" stroke-linejoin="round" stroke-linecap="round"/>
<path d="M250 627 L536 627" fill="none" stroke="#fbfaf7" stroke-width="1.7" stroke-linejoin="round" stroke-linecap="round"/>
<path d="M469 560 H500 V587 H469 Z" fill="none" stroke="#fbfaf7" stroke-width="1.7" stroke-linejoin="round" stroke-linecap="round"/>
<path d="M500 568 L536 548" fill="none" stroke="#fbfaf7" stroke-width="1.7" stroke-linejoin="round" stroke-linecap="round"/>
<path d="M264 566 Q270 575 287 576" fill="none" stroke="#fbfaf7" stroke-width="1.5" stroke-linejoin="round" stroke-linecap="round"/>
<circle cx="265" cy="566" r="2.5" fill="none" stroke="#fbfaf7" stroke-width="1.4"/>
<path d="M125 545 L232 637" stroke="#aab4c6" stroke-width="1"/>
<path d="M127 580 Q135 600 150 612 Q165 622 180 615 M125 600 Q140 612 160 616" fill="none" stroke="#fbfaf7" stroke-width="2"/>
<path d="M124 612 Q140 603 170 600 L215.5 598.6 L287 595 L358.8 594 L536 594" fill="none" stroke="#e8b861" stroke-width="8.5"/>
<path d="M124 612 Q140 603 170 600 L215.5 598.6 L287 595 L358.8 594 L536 594" fill="none" stroke="#f8d683" stroke-width="6.5"/>
<path d="M224 593 Q228 591 233.5 590 Q239 591 243 593 Q245 600 243 606 Q239 609 233.5 612 Q228 609 224 606 Q222 600 224 593 Z" fill="#fff" stroke="#333" stroke-width="1.3"/><text x="233.5" y="605.5" font-size="10" font-weight="700" fill="#222" text-anchor="middle" font-family="Liberation Sans, sans-serif">18</text>
<circle cx="340" cy="541.8" r="23" fill="rgba(150,160,215,0.22)" stroke="rgba(125,135,205,0.5)" stroke-width="4"/><circle cx="340" cy="541.8" r="14.3" fill="#6472bf"/><circle cx="340" cy="541.8" r="6" fill="#fff" stroke="#2d3a9c" stroke-width="1.7"/>
<text x="501" y="544.5" font-size="12" fill="#56627f" font-family="Liberation Sans, sans-serif">W Bro</text>
<rect x="134" y="426" width="37" height="37" rx="5" fill="#fff"/><path d="M143.5 440.9 V435.5 H148.9 M156.1 435.5 H161.5 V440.9 M161.5 448.1 V453.5 H156.1 M148.9 453.5 H143.5 V448.1" fill="none" stroke="#4a4a4a" stroke-width="2.16"/></g></svg>
<div class="t" style="left:136.60px;top:650.15px;font-size:14px;color:#333333;letter-spacing:0.157px;font-weight:400;">Location</div>
<div class="t" style="left:137.20px;top:670.36px;font-size:16px;color:#333333;letter-spacing:-0.006px;font-weight:400;">28.05135, -82.69127</div>
<div class="t" style="left:136.60px;top:709.85px;font-size:14px;color:#333333;letter-spacing:-0.525px;font-weight:400;">Speed</div>
<div class="t" style="left:137.20px;top:730.76px;font-size:16px;color:#333333;letter-spacing:0.280px;font-weight:400;">39 mph</div>
<svg style="position:absolute;left:0;top:0" width="2048" height="984"><path d="M535.4 401.8 L574.5 367 Q580.3 362.5 580.3 370 L580.3 382 L657 382 Q660.4 382 660.4 386 L660.4 420.5 Q660.4 424 657 424 L580.3 424 L580.3 435.5 Q580.3 443 574.5 437.5 Z" fill="#f34a32" stroke="#dc4029" stroke-width="0.8"/><path d="M818.1 75 L842 75 Q846.9 75 846.9 80 L846.9 128.5 L854 129.5 Q859 130 855.5 134 L835 155.5 Q833.4 157 831.8 155.5 L809.5 133 Q806.5 129.5 811 129 L818.1 128.5 Z" fill="#1b7bea" stroke="#1a6fd6" stroke-width="0.6"/></svg>
</body></html>
